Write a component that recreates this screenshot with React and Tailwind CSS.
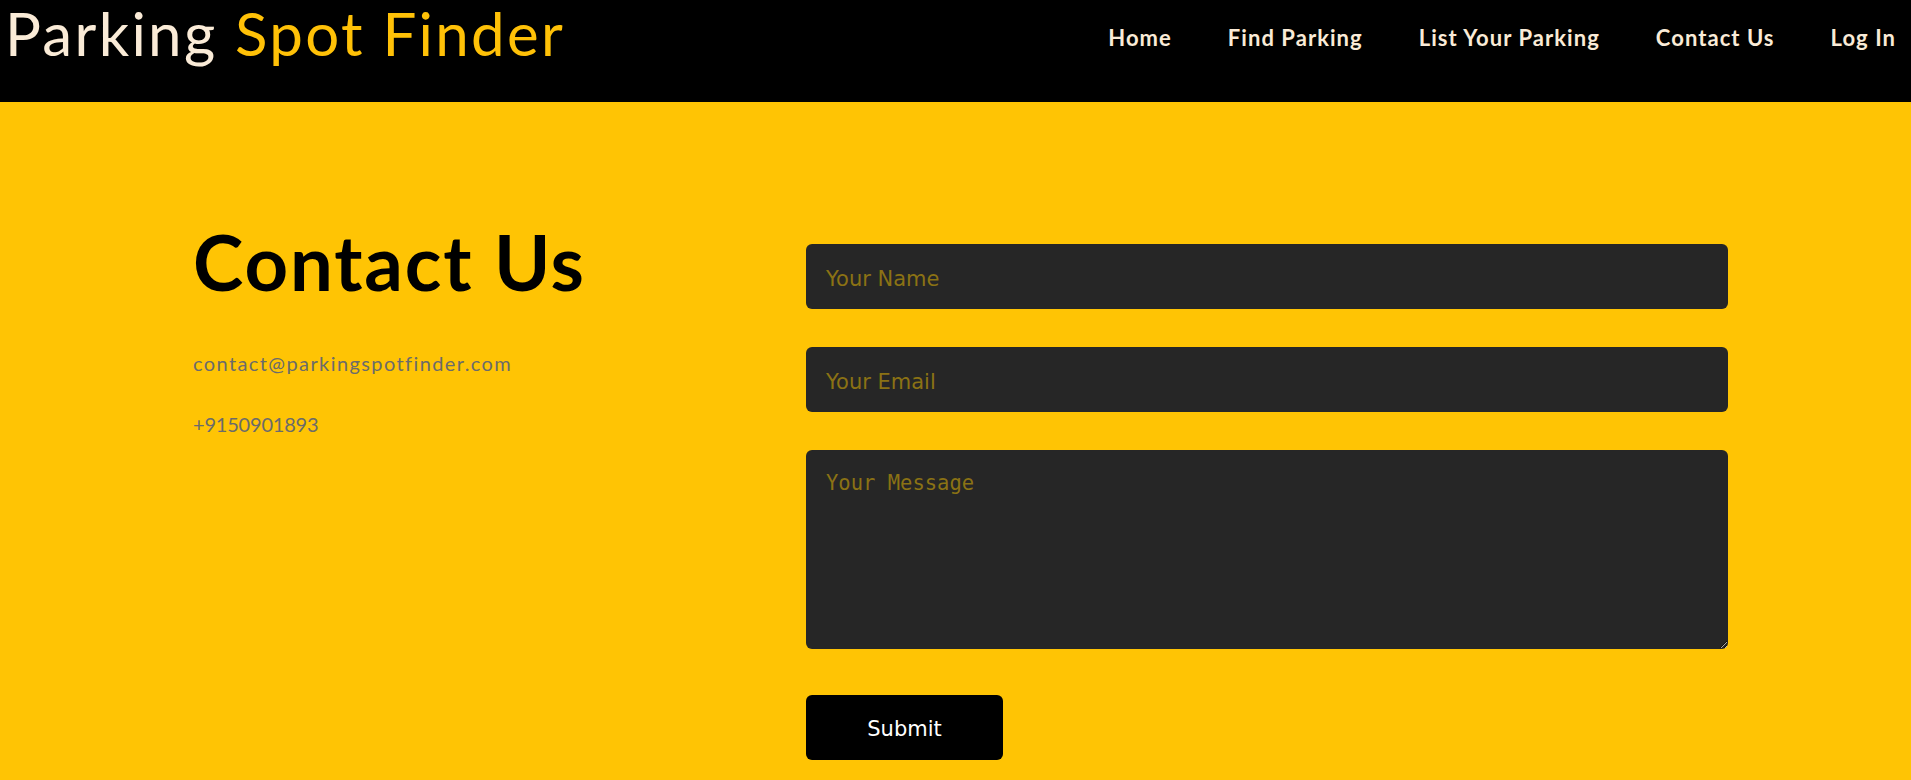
import React from 'react';

const navLinks = ['Home', 'Find Parking', 'List Your Parking', 'Contact Us', 'Log In'];

export default function App() {
  return (
    <div className="min-h-screen w-full bg-[#ffc404] font-['Lato',sans-serif]">
      {/* Header */}
      <header className="h-[102px] bg-black flex justify-between items-start">
        <h1 className="pl-[5px] pt-[3px] text-[60px] leading-none tracking-[2.3px] text-[#faebd7]">
          Parking <span className="text-[#ffc107]">Spot Finder</span>
        </h1>
        <nav className="flex gap-[56px] pr-[15px] pt-[27px]">
          {navLinks.map((link) => (
            <a key={link} href="#" className="text-[22px] leading-none font-bold tracking-[1.05px] text-[#faebd7]">
              {link}
            </a>
          ))}
        </nav>
      </header>

      {/* Contact section */}
      <main className="flex items-start pl-[193px] pt-[122px] pb-[20px]">
        <div className="w-[613px] shrink-0">
          <h2 className="text-[76px] leading-none font-bold tracking-[1.9px] text-black">Contact Us</h2>
          <p className="mt-[53px] text-[20px] leading-none text-[#6b6b6b] tracking-[1.4px]">contact@parkingspotfinder.com</p>
          <p className="mt-[41px] text-[20px] leading-none text-[#6b6b6b] tracking-[-0.2px]">+9150901893</p>
        </div>

        <form className="w-[922px] pt-[20px] flex flex-col">
          <input
            type="text"
            placeholder="Your Name"
            className="h-[65px] rounded-md bg-[#262626] px-[20px] pt-[4px] text-[21px] font-['DejaVu_Sans',sans-serif] text-white placeholder:text-[#8b7214] outline-none"
          />
          <input
            type="email"
            placeholder="Your Email"
            className="mt-[38px] h-[65px] rounded-md bg-[#262626] px-[20px] pt-[4px] text-[21px] font-['DejaVu_Sans',sans-serif] text-white placeholder:text-[#8b7214] outline-none"
          />
          <textarea
            placeholder="Your Message"
            className="mt-[38px] h-[199px] rounded-md bg-[#262626] px-[20px] pt-[21px] text-[20.5px] leading-tight font-['DejaVu_Sans_Mono',monospace] text-white placeholder:text-[#8b7214] outline-none"
          />
          <button
            type="button"
            className="mt-[46px] w-[197px] h-[65px] rounded-md bg-black pt-[4px] text-white text-[21px] font-['DejaVu_Sans',sans-serif]"
          >
            Submit
          </button>
        </form>
      </main>
    </div>
  );
}
